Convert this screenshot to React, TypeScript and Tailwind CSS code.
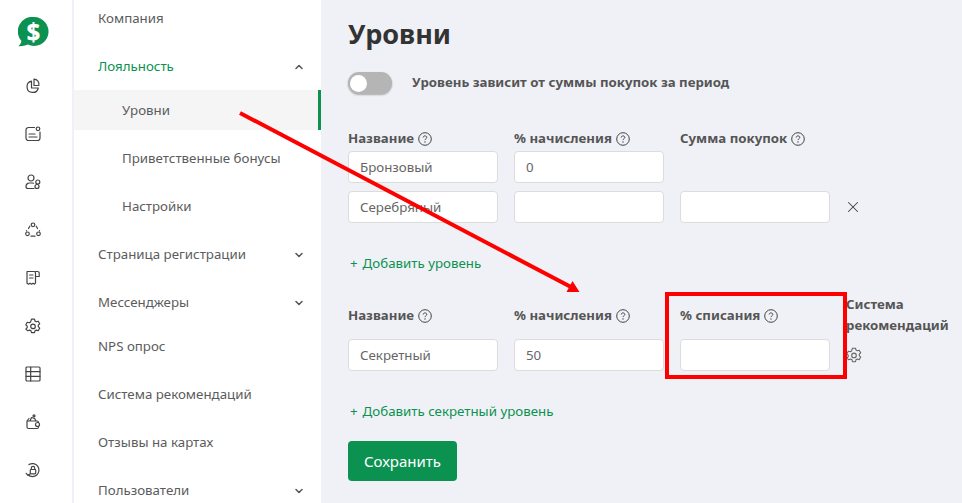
import React from "react";
import { ChevronDown, ChevronUp, X } from "lucide-react";

const font = "font-['Noto_Sans','Open_Sans',sans-serif]";

const HelpIcon = () => (
  <svg width="14" height="14" viewBox="0 0 14 14" fill="none" className="shrink-0 text-[#444]">
    <circle cx="7" cy="7" r="6.300" stroke="currentColor" strokeWidth="1" />
    <path d="M5.200 5.500c0-1 .8-1.600 1.800-1.600s1.800.6 1.800 1.500c0 1.300-1.800 1.400-1.800 2.700" stroke="currentColor" strokeWidth="1" />
    <circle cx="7" cy="10" r=".7" fill="currentColor" />
  </svg>
);

const gearPath = "M6.500 1.200h3l.5 1.900 1.300.7 1.900-.6 1.500 2.600-1.400 1.400v1.500l1.400 1.400-1.500 2.600-1.900-.6-1.300.7-.5 1.900h-3l-.5-1.900-1.300-.7-1.900.6L.8 11.100l1.400-1.400V8.200L.8 6.800l1.500-2.600 1.900.6 1.300-.7z";

const railIcons = [
  <>
    <path d="M6.500 3.200a5.700 5.700 0 1 0 6.800 6.800H6.500z" />
    <path d="M9 1.200a5 5 0 0 1 4.800 6.300H9z" />
  </>,
  <>
    <path d="M9.500 1.500H3.500A2.500 2.500 0 0 0 1 4v8a2.500 2.500 0 0 0 2.500 2.500h9A2.500 2.500 0 0 0 15 12V6" />
    <circle cx="13" cy="2.800" r="1.800" />
    <path d="M4 8h6M4 11h8" />
  </>,
  <>
    <circle cx="6" cy="4" r="3" />
    <path d="M1 12.500A3.500 3.500 0 0 1 4.500 9h3a3 3 0 0 1 1 .2M1 12.500A2 2 0 0 0 3 14.500h6" />
    <circle cx="12.800" cy="8" r="2" />
    <circle cx="12" cy="12.500" r="2" />
  </>,
  <>
    <circle cx="8" cy="2.800" r="1.800" />
    <circle cx="2.500" cy="11.800" r="1.800" />
    <circle cx="13.500" cy="11.800" r="1.800" />
    <path d="M4.800 4.200 3.500 6.500M11.200 4.200l1.300 2.300M1.500 8.500v.5M14.500 8.500v.5M6 14.200h4" />
  </>,
  <>
    <path d="M10.500 6V3a1.500 1.500 0 0 0-1.500-1.500H2v11.700l1.500 1 1.500-1 1.500 1 1.500-1 1.500 1 1-1V6" />
    <path d="M10.500 1.500h2A1.700 1.700 0 0 1 14.200 3.200V6.500h-3.700M4.500 5h3.500M4.500 8h3.500" />
  </>,
  <>
    <path d={gearPath} />
    <circle cx="8" cy="8.400" r="2.300" />
  </>,
  <>
    <rect x="1" y="1" width="14" height="14" rx="1" />
    <path d="M1 5.700h14M1 10.300h14M5.700 1v14" />
  </>,
  <>
    <path d="M2 7h10a1.500 1.500 0 0 1 1.500 1.500M13.500 12.500v.5a1.500 1.500 0 0 1-1.500 1.500H3.500A1.500 1.500 0 0 1 2 13V7l2-2.500M5 7l1.500-3.500 3 .8L11 7" />
    <circle cx="9" cy="1.800" r="1" />
    <circle cx="12.500" cy="10.500" r="2" />
  </>,
  <>
    <path d="M4 2.600A6.500 6.500 0 1 1 3 12.800" />
    <path d="M1.200 11.300 3 13.300l2-1.300" />
    <rect x="5.300" y="7.500" width="5.400" height="4.300" rx=".8" />
    <path d="M6.300 7.500V6a1.700 1.700 0 0 1 3.400 0v1.500" />
  </>,
];

const Rail = () => (
  <nav className="flex w-[72px] shrink-0 flex-col items-center bg-white pr-[6px]">
    <div className="relative mt-[17px] h-[30px] w-[31px]">
      <svg width="31" height="30" viewBox="0 0 31 30">
        <path d="M16 0a14.500 14.500 0 1 1-6.200 27.600C7 28.800 3.800 29.500.4 29.300c1.700-1.500 2.800-3.300 3-5.300A14.500 14.500 0 0 1 16 0z" fill="#0b9150" />
      </svg>
      <span className="absolute inset-0 flex items-center justify-center pl-[1px] text-[24px] leading-none font-extrabold text-white">$</span>
    </div>
    <div className="mt-[31px] flex flex-col items-center gap-8 text-[#444]">
      {railIcons.map((icon, i) => (
        <svg key={i} width="16" height="16" viewBox="0 0 16 16" fill="none" stroke="currentColor" strokeWidth="1.200" strokeLinecap="round" strokeLinejoin="round">
          {icon}
        </svg>
      ))}
    </div>
  </nav>
);

const MenuItem = ({ label, arrow, className = "" }: { label: string; arrow?: boolean; className?: string }) => (
  <div className={`flex h-10 shrink-0 items-center justify-between pt-0.5 pl-6 pr-4 text-[13.300px] text-[#5c5c5c] ${className}`}>
    <span>{label}</span>
    {arrow && <ChevronDown size={12} strokeWidth={3} className="text-[#555]" />}
  </div>
);

const SubItem = ({ label, active }: { label: string; active?: boolean }) => (
  <div className={`flex h-10 shrink-0 items-center pt-0.5 pl-12 text-[13.300px] text-[#5c5c5c] ${active ? "border-r-[3px] border-[#0b9150] bg-[#f5f5f6]" : ""}`}>
    {label}
  </div>
);

const Sidebar = () => (
  <aside className="ml-[2px] flex h-full w-[247px] shrink-0 flex-col overflow-hidden bg-white">
    <div className="-mt-[2px] flex flex-col">
      <MenuItem label="Компания" />
      <div className="mt-2 flex h-10 shrink-0 items-center justify-between pt-0.5 pl-6 pr-4 text-[13.300px] text-[#0b9150]">
        <span>Лояльность</span>
        <ChevronUp size={12} strokeWidth={3} className="text-[#555]" />
      </div>
      <div className="mt-1 flex flex-col gap-2">
        <SubItem label="Уровни" active />
        <SubItem label="Приветственные бонусы" />
        <SubItem label="Настройки" />
      </div>
      <MenuItem label="Страница регистрации" arrow className="mt-2" />
      <MenuItem label="Мессенджеры" arrow className="mt-2" />
      <MenuItem label="NPS опрос" className="mt-1" />
      <MenuItem label="Система рекомендаций" className="mt-2" />
      <MenuItem label="Отзывы на картах" className="mt-2" />
      <MenuItem label="Пользователи" arrow className="mt-2" />
    </div>
  </aside>
);

const Label = ({ text }: { text: string }) => (
  <div className="flex h-[19px] w-[150px] items-center gap-1 text-[13.250px] font-bold text-[#555]">
    <span>{text}</span>
    <HelpIcon />
  </div>
);

const Field = ({ value, className = "" }: { value?: string; className?: string }) => (
  <input
    readOnly
    value={value ?? ""}
    className={`h-8 w-[150px] rounded-[4px] border border-[#dcdcdc] bg-white px-[11px] text-[13.300px] text-[#666] outline-none ${className}`}
  />
);

const AddLink = ({ text }: { text: string }) => (
  <div className="flex gap-[5px] pl-[2px] text-[13.300px] leading-[18px] text-[#0b9150]">
    <span>+</span>
    <span>{text}</span>
  </div>
);

const Main = () => (
  <main className="flex min-w-0 flex-1 flex-col pl-[27px]">
    <h1 className="mt-[14px] h-10 text-[27px] leading-10 font-bold text-[#333]">Уровни</h1>
    <div className="mt-[18px] flex h-[22px] items-center gap-5">
      <div className="flex h-[22px] w-11 items-center rounded-full bg-[#b5b5b5] pl-[2px] shadow-[0_1px_2px_rgba(0,0,0,0.3)]">
        <div className="h-[17px] w-[17px] rounded-full bg-white" />
      </div>
      <span className="text-[13.250px] font-bold text-[#555]">Уровень зависит от суммы покупок за период</span>
    </div>

    <div className="mt-[35px] flex gap-4">
      <Label text="Название" />
      <Label text="% начисления" />
      <Label text="Сумма покупок" />
    </div>
    <div className="mt-[3px] flex gap-4">
      <Field value="Бронзовый" />
      <Field value="0" />
    </div>
    <div className="mt-2 flex items-center gap-4">
      <Field value="Серебряный" />
      <Field />
      <Field />
      <X size={18} strokeWidth={1.400} className="-ml-[2px] text-[#444]" />
    </div>
    <div className="mt-[31px]"><AddLink text="Добавить уровень" /></div>

    <div className="mt-[23px] flex gap-4">
      <div className="flex w-[150px] flex-col">
        <div className="mt-[11px]"><Label text="Название" /></div>
        <Field value="Секретный" className="mt-[14px]" />
      </div>
      <div className="flex w-[150px] flex-col">
        <div className="mt-[11px]"><Label text="% начисления" /></div>
        <Field value="50" className="mt-[14px]" />
      </div>
      <div className="flex w-[150px] flex-col">
        <div className="mt-[11px]"><Label text="% списания" /></div>
        <Field className="mt-[14px]" />
      </div>
      <div className="flex flex-col text-[13.250px] leading-[21px] font-bold text-[#555]">
        <span className="-mt-[1px]">Система</span>
        <span>рекомендаций</span>
        <svg width="16" height="16" viewBox="0 0 16 16" fill="none" stroke="#666" strokeWidth="1.100" strokeLinejoin="round" className="mt-[11px]">
          <path d={gearPath} />
          <circle cx="8" cy="8.400" r="2.300" />
        </svg>
      </div>
    </div>
    <div className="mt-[31px]"><AddLink text="Добавить секретный уровень" /></div>
    <button className="mt-[21px] h-10 w-[109px] rounded-[4px] bg-[#0b9150] text-[15px] text-white">Сохранить</button>
  </main>
);

// аннотации поверх скриншота
const Annotations = () => (
  <>
    <svg className="pointer-events-none absolute top-0 left-0" width="962" height="503" viewBox="0 0 962 503" fill="none">
      <path d="M240 113 571 287" stroke="#fe0000" strokeWidth="4" />
      <path d="M579.500 292 566.500 292 572.500 281z" fill="#fe0000" />
    </svg>
    <div className="pointer-events-none absolute top-[292px] left-[665px] h-[87px] w-[182px] border-4 border-[#fe0000]" />
  </>
);

export default function App() {
  return (
    <div className={`relative flex h-[503px] w-[962px] overflow-hidden bg-[#f0f1f6] ${font}`}>
      <Rail />
      <Sidebar />
      <Main />
      <Annotations />
    </div>
  );
}
